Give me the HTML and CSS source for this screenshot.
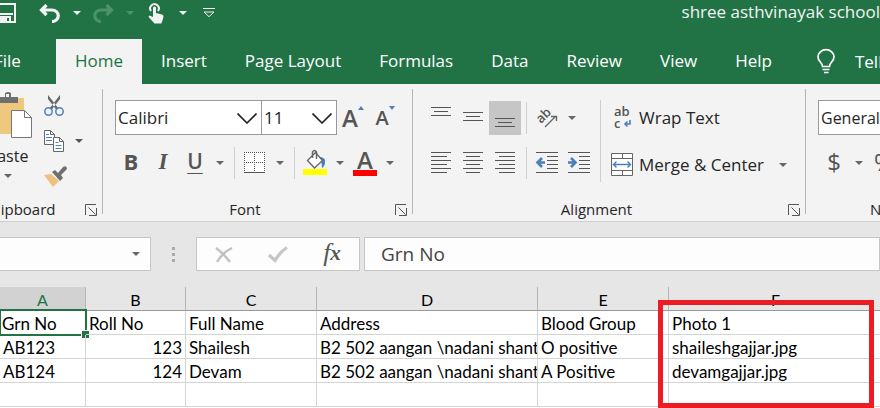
FILE: index.html
```html
<!DOCTYPE html>
<html lang="en">
<head>
<meta charset="utf-8">
<title>shree asthvinayak school - Excel</title>
<link rel="stylesheet" href="styles.css">
</head>
<body>
<svg width="0" height="0" class="defs" aria-hidden="true">
  <symbol id="caret" viewBox="0 0 8 4"><path d="M0 0h8L4 4z" fill="currentColor"/></symbol>
  <symbol id="chevron" viewBox="0 0 20 11"><path d="M.5.5 10 10 19.500.5" fill="none" stroke="#222" stroke-width="1.6"/></symbol>
  <symbol id="launch" viewBox="0 0 12 12"><path d="M.5 11V.5H11M3.500 3.500l7 7M11.500 4v7.500H4" fill="none" stroke="#555"/></symbol>
  <symbol id="undo" viewBox="0 0 22 19"><path d="M7.500 1 2.500 6l5 5M3 6h10a6 5.500 0 0 1 0 11.500" fill="none" stroke="currentColor" stroke-width="3.200"/></symbol>
</svg>
<div class="app">
  <header class="titlebar">
    <div class="quick">
      <button class="qbtn save" aria-label="Save"><svg width="20" height="20" viewBox="0 0 20 20"><path d="M1 1h18v18H1z" fill="none" stroke="currentColor" stroke-width="2"/><path d="M3 11h14" fill="none" stroke="currentColor" stroke-width="2"/><path d="M4 13h11v6h-2v-4h-2v4H4z" fill="currentColor"/></svg></button>
      <button class="qbtn" aria-label="Undo"><svg width="22" height="19"><use href="#undo"/></svg></button>
      <button class="qcaret" aria-label="Undo list"><svg width="8" height="4"><use href="#caret"/></svg></button>
      <button class="qbtn dim" aria-label="Redo"><svg class="flip" width="22" height="19"><use href="#undo"/></svg></button>
      <button class="qcaret dim" aria-label="Redo list"><svg width="8" height="4"><use href="#caret"/></svg></button>
      <button class="qbtn" aria-label="Touch mode"><svg width="18" height="22" viewBox="0 0 18 22"><path d="M4 9a4.300 4.300 0 1 1 7 0" fill="none" stroke="currentColor" stroke-width="2"/><path d="M6 5.500q1.700-2 3 0V11l6 1.500q1.500.5 1.500 2l-1 4-1.200 3H7.500L2 15.500q-1-1.500.5-2L6 15z" fill="currentColor"/></svg></button>
      <button class="qcaret" aria-label="Touch mode list"><svg width="8" height="4"><use href="#caret"/></svg></button>
      <button class="qbtn" aria-label="Customize toolbar"><svg width="12" height="10" viewBox="0 0 12 10"><path d="M0 .5h12M1 4l5 4.700L11 4z" fill="none" stroke="currentColor"/></svg></button>
    </div>
    <h1 class="doc">shree asthvinayak school</h1>
  </header>
  <nav class="tabs">
    <a href="#" class="tab file">File</a>
    <a href="#" class="tab active">Home</a>
    <a href="#" class="tab">Insert</a>
    <a href="#" class="tab">Page Layout</a>
    <a href="#" class="tab">Formulas</a>
    <a href="#" class="tab">Data</a>
    <a href="#" class="tab">Review</a>
    <a href="#" class="tab">View</a>
    <a href="#" class="tab">Help</a>
    <a href="#" class="tell"><svg width="18" height="25" viewBox="0 0 18 25"><path d="M5.500 17.500c0-4-4.500-5-4.500-9.500a8 7.300 0 0 1 16 0c0 4.500-4.500 5.500-4.500 9.500zM5.500 20.500h7M7 23.500h4.500" fill="none" stroke="currentColor" stroke-width="1.700"/></svg>Tell me</a>
  </nav>

  <section class="ribbon">
    <div class="group clip">
      <div class="clipbody">
        <button class="paste">
          <svg width="40" height="48" viewBox="0 0 40 48"><path d="M0 6h32v36H0z" fill="#edc87e"/><path d="M5 5h8V1q3-2 6 0v4h7v6H5z" fill="#6f6f6f"/><path d="M14 2h3v3h-3z" fill="#f3f3f3"/><path d="M19.500 18.500h13l7 7v20h-20z" fill="#fff" stroke="#777"/><path d="M32.500 18.500v7h7" fill="none" stroke="#777"/></svg>
          <span>Paste</span>
          <svg width="8" height="4"><use href="#caret"/></svg>
        </button>
        <div class="cliptools">
          <button class="btn" aria-label="Cut"><svg width="20" height="21" viewBox="0 0 20 21"><path d="m4 0 10.500 13.500-2 1.500L4 4zM16 0 5.500 13.500l2 1.500L16 4z" fill="#666"/><circle cx="4.500" cy="16.500" r="3.700" fill="none" stroke="#4a80bd" stroke-width="1.500"/><circle cx="15.500" cy="16.500" r="3.700" fill="none" stroke="#4a80bd" stroke-width="1.500"/></svg></button>
          <button class="btn copy" aria-label="Copy"><svg width="20" height="22" viewBox="0 0 20 22"><path d="M.5.5h6l4 4v10H.5z" fill="#fff" stroke="#666"/><path d="M6.500.5v4h4" fill="none" stroke="#666"/><path d="M2 4.500h3M2 7.500h6M2 10.500h6" stroke="#4a80bd"/><path d="M9.500 7.500h6l4 4v10h-10z" fill="#fff" stroke="#666"/><path d="M15.500 7.500v4h4" fill="none" stroke="#666"/><path d="M11.500 12.500h3M11.500 15.500h6M11.500 18.500h6" stroke="#4a80bd"/></svg><svg width="8" height="4"><use href="#caret"/></svg></button>
          <button class="btn" aria-label="Format painter"><svg width="24" height="21" viewBox="0 0 24 21"><path d="m0 9 7-1 8 7-6 6z" fill="#edc180"/><path d="m8 6 3-2 3 3 5-6q4-2 4 2l-6 6 2 3-3 3z" fill="#707070"/></svg></button>
        </div>
      </div>
      <div class="foot"><span>Clipboard</span><button class="launch" aria-label="Clipboard options"><svg width="12" height="12"><use href="#launch"/></svg></button></div>
    </div>

    <div class="group font">
      <div class="row top">
        <div class="combo face"><select aria-label="Font"><option>Calibri</option></select><svg width="20" height="11"><use href="#chevron"/></svg></div>
        <div class="combo size"><select aria-label="Font size"><option>11</option></select><svg width="20" height="11"><use href="#chevron"/></svg></div>
        <button class="btn grow" aria-label="Increase font size"><span>A</span><svg width="6" height="4" viewBox="0 0 6 4"><path d="M0 4h6L3 0z" fill="#4a80bd"/></svg></button>
        <button class="btn shrink" aria-label="Decrease font size"><span>A</span><svg width="6" height="4" viewBox="0 0 6 4"><path d="M0 0h6L3 4z" fill="#4a80bd"/></svg></button>
      </div>
      <div class="row bottom">
        <button class="btn w32 bold">B</button>
        <button class="btn w32 italic">I</button>
        <button class="btn w32 under">U</button>
        <button class="btn drop" aria-label="Underline styles"><svg width="8" height="4"><use href="#caret"/></svg></button>
        <i class="rule"></i>
        <button class="btn w32" aria-label="Borders"><svg width="22" height="22" viewBox="0 0 22 22"><path d="M0 0h21v21H0z" fill="#fff"/><path d="M0 .5h22M0 10.500h22M.5 0v21M10.500 0v21M20.500 0v21" stroke="#555" stroke-dasharray="1 1" fill="none"/><path d="M0 20.500h21" stroke="#555"/></svg></button>
        <button class="btn drop" aria-label="Border styles"><svg width="8" height="4"><use href="#caret"/></svg></button>
        <i class="rule"></i>
        <button class="btn w32" aria-label="Fill color"><svg width="24" height="26" viewBox="0 0 24 26"><path d="M15 7q8 0 7 5 0 4-3 6 0-7-4-11" fill="#4a80bd"/><path d="m4.500 10.500 8-8 7 8-8 7.500z" fill="#fff" stroke="#666" stroke-width="1.300"/><path d="M9.500 8V2q2-3 4 0v7" fill="none" stroke="#666" stroke-width="1.500"/><path d="M0 19h24v6H0z" fill="#ff0"/></svg></button>
        <button class="btn drop" aria-label="Fill colors"><svg width="8" height="4"><use href="#caret"/></svg></button>
        <button class="btn w32 ink"><span>A</span></button>
        <button class="btn drop" aria-label="Font colors"><svg width="8" height="4"><use href="#caret"/></svg></button>
      </div>
      <div class="foot"><span>Font</span><button class="launch" aria-label="Font options"><svg width="12" height="12"><use href="#launch"/></svg></button></div>
    </div>

    <div class="group align">
      <div class="alignbody">
        <div class="alignleft">
          <div class="row top">
            <button class="btn w32" aria-label="Top align"><svg width="20" height="22"><path d="M0 .5h20M3 4.500h14M0 8.500h20" stroke="#555"/></svg></button>
            <button class="btn w32" aria-label="Middle align"><svg width="20" height="22"><path d="M0 5.500h20M3 9.500h14M0 13.500h20" stroke="#555"/></svg></button>
            <button class="btn w32 on" aria-label="Bottom align"><svg width="20" height="22"><path d="M0 11.500h20M3 15.500h14M0 19.500h20" stroke="#555"/></svg></button>
            <i class="rule"></i>
            <button class="btn w32" aria-label="Orientation"><svg width="22" height="22" viewBox="0 0 22 22"><text x="5" y="17" transform="rotate(-45 5 17)" class="ab">ab</text><path d="m9 20 11-11M15 9.500h5.500V14" fill="none" stroke="#666" stroke-width="1.400"/></svg></button>
            <button class="btn drop" aria-label="Orientation list"><svg width="8" height="4"><use href="#caret"/></svg></button>
          </div>
          <div class="row bottom">
            <button class="btn w32" aria-label="Align left"><svg width="20" height="22"><path d="M0 .5h20M0 4.500h16M0 8.500h20M0 12.500h16M0 16.500h20M0 20.500h16" stroke="#555"/></svg></button>
            <button class="btn w32" aria-label="Center"><svg width="20" height="22"><path d="M0 .5h20M3 4.500h14M0 8.500h20M3 12.500h14M0 16.500h20M3 20.500h14" stroke="#555"/></svg></button>
            <button class="btn w32" aria-label="Align right"><svg width="20" height="22"><path d="M0 .5h20M4 4.500h16M0 8.500h20M4 12.500h16M0 16.500h20M4 20.500h16" stroke="#555"/></svg></button>
            <i class="rule"></i>
            <button class="btn w32" aria-label="Decrease indent"><svg width="22" height="22"><path d="M0 .5h22M11 4.500h11M11 8.500h11M11 12.500h11M11 16.500h11M0 20.500h22" stroke="#555"/><path d="M9 10.500H2M6 6l-4.500 4.500L6 15" fill="none" stroke="#4a80bd" stroke-width="2.600"/></svg></button>
            <button class="btn w32" aria-label="Increase indent"><svg width="22" height="22"><path d="M0 .5h22M11 4.500h11M11 8.500h11M11 12.500h11M11 16.500h11M0 20.500h22" stroke="#555"/><path d="M0 10.500h7M3 6l4.500 4.500L3 15" fill="none" stroke="#4a80bd" stroke-width="2.600"/></svg></button>
          </div>
        </div>
        <div class="alignright">
          <button class="btn wide"><svg width="22" height="24" viewBox="0 0 22 24"><text x="3" y="10" class="ab">ab</text><text x="3" y="22" class="ab">c</text><path d="M19 14v4h-5M16.500 15.500 14 18l2.500 2.500" fill="none" stroke="#4a80bd" stroke-width="1.600"/></svg>Wrap Text</button>
          <button class="btn wide merge"><svg width="22" height="24" viewBox="0 0 22 24"><path d="M.5.5h21v22H.5zM.5 5.500h21M.5 17.500h21M11.500.5v5M11.500 17.500v5" fill="#fff" stroke="#666"/><path d="M2.500 11.500h17M5.500 8.500l-3 3 3 3M16.500 8.500l3 3-3 3" fill="none" stroke="#4a80bd" stroke-width="1.400"/></svg>Merge &amp; Center<svg class="mcaret" width="8" height="4"><use href="#caret"/></svg></button>
        </div>
      </div>
      <div class="foot"><span>Alignment</span><button class="launch" aria-label="Alignment options"><svg width="12" height="12"><use href="#launch"/></svg></button></div>
    </div>

    <div class="group number">
      <div class="row top"><div class="combo fmt"><select aria-label="Number format"><option>General</option></select></div></div>
      <div class="row bottom">
        <button class="btn w32 sign">$</button>
        <button class="btn drop" aria-label="Currencies"><svg width="8" height="4"><use href="#caret"/></svg></button>
        <button class="btn w32 sign">%</button>
      </div>
      <div class="foot"><span>Number</span></div>
    </div>
  </section>

  <section class="formulabar">
    <div class="namebox"><input aria-label="Name box" value="A1"><svg width="8" height="4"><use href="#caret"/></svg></div>
    <div class="dots"><i></i><i></i><i></i></div>
    <div class="fxbox">
      <button class="btn" aria-label="Cancel"><svg width="18" height="17" viewBox="0 0 18 17"><path d="M1 2q7 5 14 14M17 2Q8 6 2 16" fill="none" stroke="#c1c1c1" stroke-width="2.400"/></svg></button>
      <button class="btn" aria-label="Enter"><svg width="20" height="17" viewBox="0 0 20 17"><path d="m1 9 6 5.500Q12 6 19 1.500" fill="none" stroke="#c6c6c6" stroke-width="3.200"/></svg></button>
      <button class="btn fx">f<small>x</small></button>
    </div>
    <input class="formula" aria-label="Formula" value="Grn No">
  </section>

  <table class="sheet">
    <colgroup><col class="cn"><col class="ca"><col class="cb"><col class="cc"><col class="cd"><col class="ce"><col class="cf"></colgroup>
    <thead><tr><th></th><th class="sel">A</th><th>B</th><th>C</th><th>D</th><th>E</th><th class="marked">F<i class="mark"></i></th></tr></thead>
    <tbody>
      <tr><th>1</th><td class="cur">Grn No<i class="frame"></i></td><td>Roll No</td><td>Full Name</td><td>Address</td><td>Blood Group</td><td>Photo 1</td></tr>
      <tr><th>2</th><td>AB123</td><td class="num">123</td><td>Shailesh</td><td>B2 502 aangan \nadani shantig</td><td>O positive</td><td>shaileshgajjar.jpg</td></tr>
      <tr><th>3</th><td>AB124</td><td class="num">124</td><td>Devam</td><td>B2 502 aangan \nadani shantig</td><td>A Positive</td><td>devamgajjar.jpg</td></tr>
      <tr><th>4</th><td></td><td></td><td></td><td></td><td></td><td></td></tr>
    </tbody>
  </table>
</div>
</body>
</html>
```
FILE: styles.css
```css
* { box-sizing: border-box; }
html, body { height: 100%; }
body {
  margin: 0;
  overflow: hidden;
  background: #fff;
  color: #262626;
  font: 16px/24px "Open Sans", "Noto Sans", sans-serif;
}
button, select, input { font: inherit; color: inherit; border: 0; padding: 0; margin: 0; background: none; border-radius: 0; }
svg { display: block; flex: none; overflow: visible; }
.defs { position: absolute; }

/* The window is scrolled sideways by the row-number column. */
.app { margin-left: -40px; min-height: 100%; overflow: hidden; }

.titlebar { display: flex; height: 39px; background: #217346; color: #f3f3f3; white-space: nowrap; }
.quick { display: flex; align-items: center; height: 26px; padding-left: 30px; flex: 1; }
.qbtn { width: 32px; display: flex; justify-content: center; }
.save { width: 32px; margin-right: 12px; }
.qcaret { width: 21px; display: flex; justify-content: center; }
.dim { color: #4f9169; }
.flip { transform: scaleX(-1); }
.doc { margin: 0; font-size: 17px; font-weight: 400; line-height: 24px; }

.tabs { display: flex; height: 45px; background: #217346; white-space: nowrap; font-size: 17px; }
.tab, .tell { color: #fff; text-decoration: none; line-height: 44px; padding: 0 19px; }
.file { padding-left: 34px; padding-right: 35px; }
.active { background: #f3f3f3; color: #217346; }
.tell { display: flex; align-items: center; gap: 20px; padding: 0 24px 0 26px; }

.ribbon { display: flex; height: 138px; background: #f3f3f3; border-bottom: 1px solid #cfcfcf; white-space: nowrap; }
.group { position: relative; display: flex; flex-direction: column; flex: none; padding: 16px 0 0 12px; }
.group::after { content: ""; position: absolute; right: 0; top: 5px; bottom: 7px; width: 1px; background: #b5b5b5; }
.number::after { display: none; }
.row { display: flex; align-items: center; }
.top { height: 35px; }
.bottom { height: 32px; margin-top: 12px; }
.btn { display: flex; align-items: center; justify-content: center; color: #555; }
.w32 { width: 32px; height: 34px; }
.drop { width: 18px; height: 34px; color: #666; }
.rule { width: 1px; height: 32px; background: #cfcfcf; margin: 0 4px 0 5px; }
.foot { position: relative; margin-top: auto; margin-bottom: 1px; padding-right: 38px; text-align: center; font-size: 15px; line-height: 22px; }
.foot span { display: block; }
.launch { position: absolute; right: 6px; top: 6px; }

.clip { width: 143px; padding: 8px 0 0 22px; }
.clip .foot { padding-right: 42px; }
.clipbody { display: flex; }
.paste { display: flex; flex-direction: column; align-items: center; width: 52px; color: #262626; }
.paste svg:first-child { margin-right: -8px; }
.paste span { margin-top: 4px; }
.paste svg:last-child { margin-top: 6px; color: #666; }
.cliptools { display: flex; flex-direction: column; align-items: flex-start; gap: 14px; padding: 3px 0 0 10px; }
.copy { gap: 11px; }

.font { width: 310px; }
.combo { position: relative; height: 35px; border: 1px solid #999; background: #fff; }
.combo select { width: 100%; height: 100%; padding: 0 2px; appearance: none; }
.combo svg { position: absolute; right: 4px; top: 12px; pointer-events: none; }
.face { width: 147px; font-size: 17px; }
.size { width: 76px; margin-left: -1px; font-size: 17px; }
.grow, .shrink { align-items: flex-start; font-weight: 600; width: 32px; }
.grow { font-size: 24px; }
.shrink { font-size: 20px; }
.bold { font-weight: 700; font-size: 22px; padding-bottom: 4px; }
.italic { font: italic 700 23px/24px "Liberation Serif", serif; padding-bottom: 2px; }
.under { font-weight: 600; font-size: 21px; padding-bottom: 4px; text-decoration: underline; text-underline-offset: 4px; text-decoration-thickness: 1px; }
.ink span { width: 24px; height: 26px; border-bottom: 6px solid #f00; font-weight: 600; font-size: 24px; line-height: 20px; }

.align { width: 393px; }
.alignbody { display: flex; }
.alignleft { width: 175px; }
.on { background: #c6c6c6; }
.ab { font: 600 13px "Open Sans", sans-serif; fill: #555; }
.alignright { display: flex; flex-direction: column; align-items: flex-start; gap: 12px; padding-left: 10px; border-left: 1px solid #cfcfcf; }
.wide { gap: 6px; height: 35px; color: #262626; font-size: 17px; }
.mcaret { margin-left: 9px; color: #666; }

.number { width: 174px; }
.fmt { width: 130px; }
.sign { font-size: 24px; padding-bottom: 2px; }
.number .foot { padding-right: 0; }

.formulabar { display: flex; height: 65px; padding: 15px 0 16px; background: #e6e6e6; }
.namebox, .fxbox { display: flex; align-items: center; border: 1px solid #c6c6c6; background: #fdfdfd; }
.namebox { width: 191px; padding: 0 10px 0 20px; color: #666; }
.namebox input { flex: 1; min-width: 0; font-size: 18px; color: #444; }
.dots { width: 45px; display: flex; flex-direction: column; align-items: center; justify-content: center; gap: 3px; }
.dots i { width: 3px; height: 3px; background: #aaa; }
.fxbox { width: 164px; }
.fxbox .btn { flex: 1; }
.fx { font: italic 400 26px/30px "Liberation Serif", serif; padding-bottom: 2px; }
.fx small { font-size: 21px; font-weight: 700; }
.formula { flex: 1; margin-left: 4px; padding: 0 16px; border: 1px solid #c6c6c6; background: #fdfdfd; color: #444; font: 19px/28px "Open Sans", sans-serif; }

.sheet { width: 100%; table-layout: fixed; border-spacing: 0; background: #fff; color: #000; font: 17px/20px Lato, "Open Sans", sans-serif; }
.cn { width: 40px; }
.ca { width: 86px; }
.cb { width: 100px; }
.cc, .ce { width: 131px; }
.cd { width: 221px; }
.cf { width: 214px; }
.sheet td { position: relative; height: 24px; padding: 3px 3px 0; border-right: 1px solid #d4d4d4; border-bottom: 1px solid #d4d4d4; white-space: nowrap; overflow: hidden; }
.sheet td.cur { overflow: visible; padding-left: 2px; }
.sheet td.num { text-align: right; }
.sheet th { height: 24px; padding: 3px 0 0; font-size: 16px; font-weight: 400; background: #e6e6e6; border-bottom: 1px solid #999; border-right: 1px solid #b5b5b5; }
.sheet th.sel { background: #d2d2d2; color: #217346; }
.marked { position: relative; }
.frame { position: absolute; inset: -2px -2px -2px -1px; border: 2px solid #217346; }
.frame::after { content: ""; position: absolute; right: -4px; bottom: -4px; width: 7px; height: 7px; background: #217346; border: 1px solid #fff; border-right: 0; border-bottom: 0; }
.mark { position: absolute; z-index: 2; left: -11px; top: 13px; width: 216px; height: 108px; border: 5px solid #ed1c24; }
```
